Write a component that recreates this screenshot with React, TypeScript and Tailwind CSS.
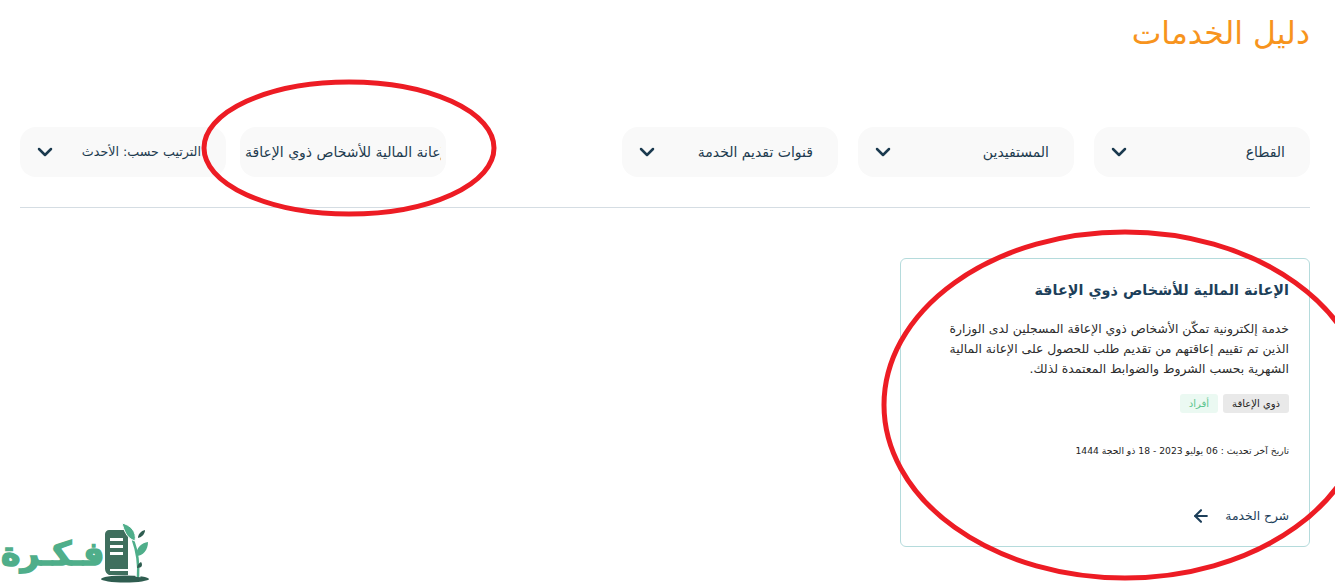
import { ChevronDown, ArrowLeft } from 'lucide-react'

const filters = ['القطاع', 'المستفيدين', 'قنوات تقديم الخدمة']

function FilterBox({ label }: { label: string }) {
  return (
    <div className="w-[216px] h-[50px] rounded-2xl bg-[#f9f9f9] flex items-center justify-between pr-[25px] pl-[13px] text-[14px] text-[#1d3b4f]">
      <span>{label}</span>
      <ChevronDown size={24} strokeWidth={2.5} className="text-[#1b3a4f]" />
    </div>
  )
}

function Logo() {
  return (
    <div className="absolute left-0 bottom-0 h-[60px] w-[152px]" dir="ltr">
      <span dir="rtl" className="absolute left-[1px] top-[1px] text-[33px] leading-[60px] font-bold text-[#4fae8a] whitespace-nowrap [-webkit-text-stroke:1.5px_#4fae8a]">فـكـرة</span>
      <svg width="52" height="60" viewBox="0 0 52 60" className="absolute left-[100px] top-0">
        <ellipse cx="25" cy="56" rx="24" ry="3.5" fill="#2f5d50" />
        <path d="M9 7h19v45H9c-2-1-4-3-4-6V11c0-2 2-4 4-4z" fill="#3f6f5e" />
        <rect x="10" y="15" width="13" height="3" fill="#fff" />
        <rect x="10" y="22" width="13" height="3" fill="#fff" />
        <rect x="10" y="29" width="13" height="3" fill="#fff" />
        <rect x="10" y="46" width="20" height="2" fill="#fff" />
        <path d="M38 54C39 40 37 28 33 17" stroke="#fff" strokeWidth="5" fill="none" />
        <path d="M38 54C39 40 37 28 33 17" stroke="#4fae8a" strokeWidth="2.5" fill="none" />
        <path d="M35 18C26 15 24 7 22 0c8 2 15 8 13 18z" fill="#4fae8a" stroke="#fff" strokeWidth="1" />
        <path d="M36 33c0-9 6-13 12-14 0 8-5 14-12 14z" fill="#4fae8a" />
        <path d="M38 15c0-4 3-7 7-8 0 4-3 7-7 8z" fill="#2f5d50" />
        <path d="M37 45c0-3 2-5 4-6 2 3 1 6-4 6z" fill="#2f5d50" />
      </svg>
    </div>
  )
}

export default function App() {
  return (
    <div dir="rtl" className="relative w-[1335px] h-[583px] overflow-hidden bg-white font-['DejaVu_Sans',sans-serif]">
      <div className="pr-[25px] pl-[20px]">
        {/* Header */}
        <h1 className="h-[127px] pt-[13px] text-[31.5px] leading-[40px] text-[#f7941d]">دليل الخدمات</h1>

        {/* Filters */}
        <div className="flex justify-between pb-[30px] border-b border-[#d5dde3]">
          <div className="flex gap-[20px]">
            {filters.map(f => <FilterBox key={f} label={f} />)}
          </div>
          <div className="flex gap-[14px]">
            <div className="w-[206px] h-[50px] rounded-2xl bg-[#f9f9f9] flex items-center px-[5px] text-[14px] text-[#1d3b4f]">
              <div className="w-full overflow-hidden flex justify-end">
                <span className="whitespace-nowrap shrink-0">الإعانة المالية للأشخاص ذوي الإعاقة</span>
              </div>
            </div>
            <div className="w-[206px] h-[50px] rounded-2xl bg-[#f9f9f9] flex items-center justify-between pr-[25px] pl-[13px] text-[12.7px] text-[#1d3b4f]">
              <span>الترتيب حسب: الأحدث</span>
              <ChevronDown size={24} strokeWidth={2.5} className="text-[#1b3a4f]" />
            </div>
          </div>
        </div>

        {/* Card */}
        <div className="mt-[50px] w-[410px] h-[289px] border border-[#b5dbdc] rounded-md px-[20px] pt-[18px] flex flex-col">
          <h3 className="text-[14.4px] leading-[26px] font-semibold text-[#1d3f5a]">الإعانة المالية للأشخاص ذوي الإعاقة</h3>
          <p className="mt-[16px] text-[12.4px] leading-[20px] text-[#2c2c2c]">
            خدمة إلكترونية تمكّن الأشخاص ذوي الإعاقة المسجلين لدى الوزارة الذين تم تقييم إعاقتهم من تقديم طلب للحصول على الإعانة المالية الشهرية بحسب الشروط والضوابط المعتمدة لذلك.
          </p>
          <div className="mt-[15px] flex gap-[5px] text-[10px]">
            <span className="h-[19px] px-[9px] leading-[19px] rounded-[3px] bg-[#e9e9e9] text-[#222]">ذوي الإعاقة</span>
            <span className="h-[19px] px-[9px] leading-[19px] rounded-[3px] bg-[#ebf9f2] text-[#5cc58f]">أفراد</span>
          </div>
          <div className="mt-[30px] text-[9.2px] leading-[16px] text-[#222]">تاريخ آخر تحديث : 06 يوليو 2023 - 18 ذو الحجة 1444</div>
          <div className="mt-[47px] flex items-center gap-[14px] text-[12.3px] text-[#1d3f5a]">
            <span>شرح الخدمة</span>
            <ArrowLeft size={20} strokeWidth={2.5} />
          </div>
        </div>
      </div>

      <Logo />

      {/* Red annotation circles */}
      <svg width="1335" height="583" className="absolute inset-0 pointer-events-none">
        <ellipse cx="349" cy="148" rx="145" ry="66" fill="none" stroke="#ed1c24" strokeWidth="5" />
        <ellipse cx="1125" cy="405" rx="241" ry="173" fill="none" stroke="#ed1c24" strokeWidth="5" />
      </svg>
    </div>
  )
}
